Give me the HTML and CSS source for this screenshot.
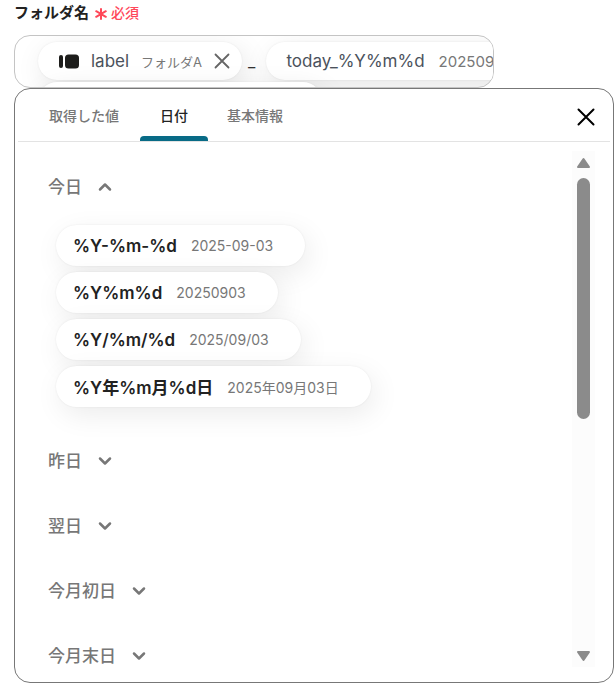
FILE: index.html
```html
<!DOCTYPE html>
<html lang="ja">
<head>
<meta charset="utf-8">
<meta name="viewport" content="width=device-width, initial-scale=1">
<title>フォルダ名</title>
<link rel="stylesheet" href="styles.css">
</head>
<body>
<main class="page">
  <div class="field-head">
    <span class="field-label">フォルダ名</span>
    <span class="required"><svg class="star" viewBox="0 0 12 12" aria-hidden="true"><path d="M6 1v10M1.2 3.2l9.6 5.6M1.2 8.8l9.6-5.6"/></svg>必須</span>
  </div>
  <div class="field">
    <div class="field-row">
      <span class="token">
        <svg class="token-icon" viewBox="0 0 22 16" aria-hidden="true"><rect x="1" y="2" width="4" height="13" rx="2"/><rect x="7" y="1.500" width="14" height="14" rx="3.500"/></svg>
        <span class="token-name">label</span>
        <span class="token-value">フォルダA</span>
        <button class="token-remove" type="button" aria-label="削除"><svg viewBox="0 0 16 16"><path d="M1.500 1.500l13 13M14.500 1.500l-13 13"/></svg></button>
      </span>
      <span class="separator">_</span>
      <span class="token token-date">
        <span class="token-name">today_%Y%m%d</span>
        <span class="token-value">20250903</span>
      </span>
    </div>
    <div class="field-row"><span class="token token-blank"></span></div>
  </div>

  <section class="popover">
    <header class="popover-head">
      <nav class="tabs" role="tablist">
        <button class="tab" type="button" role="tab">取得した値</button>
        <button class="tab tab-active" type="button" role="tab" aria-selected="true">日付</button>
        <button class="tab" type="button" role="tab">基本情報</button>
      </nav>
      <button class="close" type="button" aria-label="閉じる"><svg viewBox="0 0 18 18"><path d="M1.500 1.500l15 15M16.500 1.500l-15 15"/></svg></button>
    </header>
    <div class="popover-body">
      <div class="groups">
        <button class="group" type="button" aria-expanded="true">今日<svg class="chevron" viewBox="0 0 14 10"><path d="M2 7.500l5-5 5 5"/></svg></button>
        <div class="options">
          <button class="option" type="button"><span class="format">%Y-%m-%d</span><span class="sample">2025-09-03</span></button>
          <button class="option" type="button"><span class="format">%Y%m%d</span><span class="sample">20250903</span></button>
          <button class="option" type="button"><span class="format">%Y/%m/%d</span><span class="sample">2025/09/03</span></button>
          <button class="option" type="button"><span class="format">%Y年%m月%d日</span><span class="sample">2025年09月03日</span></button>
        </div>
        <button class="group" type="button" aria-expanded="false">昨日<svg class="chevron" viewBox="0 0 14 10"><path d="M2 2.500l5 5 5-5"/></svg></button>
        <button class="group" type="button" aria-expanded="false">翌日<svg class="chevron" viewBox="0 0 14 10"><path d="M2 2.500l5 5 5-5"/></svg></button>
        <button class="group" type="button" aria-expanded="false">今月初日<svg class="chevron" viewBox="0 0 14 10"><path d="M2 2.500l5 5 5-5"/></svg></button>
        <button class="group" type="button" aria-expanded="false">今月末日<svg class="chevron" viewBox="0 0 14 10"><path d="M2 2.500l5 5 5-5"/></svg></button>
      </div>
      <div class="scrollbar" aria-hidden="true">
        <svg class="arrow" viewBox="0 0 15 12"><path d="M7.500 2L13 10H2z"/></svg>
        <div class="track"><div class="thumb"></div></div>
        <svg class="arrow" viewBox="0 0 15 12"><path d="M7.500 10L13 2H2z"/></svg>
      </div>
    </div>
  </section>
</main>
</body>
</html>
```
FILE: styles.css
```css
* {
  box-sizing: border-box;
}

body {
  margin: 0;
  background: #fff;
  color: #222;
  font-family: Inter, "Noto Sans CJK JP", sans-serif;
  font-size: 16px;
}

button {
  margin: 0;
  padding: 0;
  border: 0;
  background: none;
  color: inherit;
  font: inherit;
  cursor: pointer;
}

svg {
  display: block;
  flex: none;
  fill: none;
  stroke: currentColor;
  stroke-linecap: round;
  stroke-linejoin: round;
}

.page {
  display: flex;
  flex-direction: column;
  height: 100vh;
  min-height: 480px;
  padding: 0 1px 0 14px;
}

.field-head {
  display: flex;
  align-items: center;
  gap: 6px;
  height: 35px;
  padding-bottom: 12px;
  flex: none;
}

.field-label {
  font-size: 15px;
  font-weight: 700;
}

.required {
  display: flex;
  align-items: center;
  gap: 4px;
  color: #ff4859;
  font-size: 14px;
  font-weight: 500;
}

.star {
  width: 12px;
  height: 12px;
  margin-top: 4px;
  stroke-width: 2;
}

.field {
  flex: none;
  max-width: 480px;
  height: 53px;
  padding: 6px 0 0 23px;
  overflow: hidden;
  border: 1px solid #c4c4c4;
  border-radius: 16px;
}

.field-row {
  display: flex;
  align-items: center;
  gap: 6px;
  margin-bottom: 2px;
}

.token {
  display: flex;
  flex: none;
  align-items: center;
  height: 38px;
  padding: 0 12px 0 20px;
  border-radius: 20px;
  background: #fff;
  box-shadow: 4px 8px 28px rgba(0, 0, 0, 0.1), 0 0 2px rgba(0, 0, 0, 0.08);
  color: #4b525c;
  white-space: nowrap;
}

.token-date {
  margin-left: 5px;
}

.token-date .token-value {
  margin-left: 14px;
  font-size: 15px;
}

.token-blank {
  width: 284px;
}

.token-icon {
  width: 22px;
  height: 16px;
  margin-right: 11px;
  fill: #1d1d1b;
  stroke: none;
}

.token-name {
  font-size: 17px;
}

.token-value {
  margin-left: 12px;
  color: #777;
  font-size: 13px;
}

.token-remove {
  margin-left: 12px;
  color: #666;
}

.token-remove svg {
  width: 16px;
  height: 16px;
  stroke-width: 1.8;
}

.separator {
  color: #333;
}

.popover {
  display: flex;
  flex: 1;
  flex-direction: column;
  min-height: 0;
  border: 1px solid #777;
  border-radius: 16px;
  background: #fff;
}

.popover-head {
  display: flex;
  flex: none;
  align-items: center;
  justify-content: space-between;
  height: 53px;
  margin: 0 3px;
  padding: 0 15px 0 16px;
  border-bottom: 1px solid #e3e3e3;
}

.tabs {
  display: flex;
  align-self: stretch;
}

.tab {
  padding: 5px 21px 0 15px;
  border-bottom: 5px solid transparent;
  color: #777;
  font-size: 14px;
  font-weight: 500;
}

.tab-active {
  position: relative;
  padding: 5px 20px 0;
  color: #222;
}

.tab-active + .tab {
  padding-left: 19px;
}

.tab-active::after {
  content: "";
  position: absolute;
  right: 0;
  bottom: -5px;
  left: 0;
  height: 5px;
  border-radius: 4px 4px 0 0;
  background: #086b86;
}

.close {
  margin-top: 4px;
  color: #000;
}

.close svg {
  width: 18px;
  height: 18px;
  stroke-width: 2;
}

.popover-body {
  display: flex;
  flex: 1;
  min-height: 0;
  padding: 9px 18px 15px 0;
}

.groups {
  flex: 1;
  overflow: hidden;
  padding: 2px 0 0 33px;
}

.group {
  display: flex;
  align-items: center;
  gap: 16px;
  height: 65px;
  color: #777;
  font-size: 17px;
  font-weight: 500;
}

.chevron {
  width: 14px;
  height: 10px;
  margin-top: 2px;
  stroke-width: 2.5;
}

.options {
  display: flex;
  flex-direction: column;
  align-items: flex-start;
  gap: 6px;
  padding: 7px 8px 20px;
}

.option {
  display: flex;
  align-items: center;
  gap: 14px;
  height: 41px;
  padding: 0 32px 0 17px;
  border-radius: 21px;
  background: #fff;
  box-shadow: 4px 8px 28px rgba(0, 0, 0, 0.08), 0 0 2px rgba(0, 0, 0, 0.08);
}

.format {
  font-size: 17px;
  font-weight: 600;
}

.sample {
  color: #777;
  font-size: 14px;
}

.scrollbar {
  display: flex;
  flex: none;
  flex-direction: column;
  align-items: center;
  gap: 9px;
  width: 23px;
  padding: 6px 0 5px;
  background: #fcfcfc;
}

.arrow {
  width: 15px;
  height: 12px;
  color: #8b8b8b;
  fill: #8b8b8b;
  stroke-width: 2;
}

.track {
  flex: 1;
  width: 13px;
}

.thumb {
  height: 52%;
  border-radius: 7px;
  background: #8b8b8b;
}
```
